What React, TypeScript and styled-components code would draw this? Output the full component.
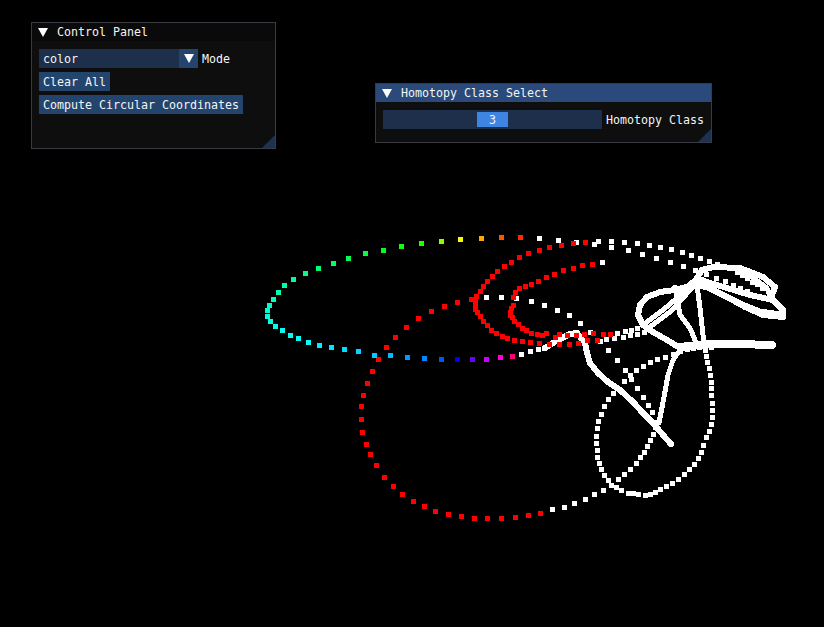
import React from "react";
import styled, { createGlobalStyle } from "styled-components";

const GlobalStyle = createGlobalStyle`
  html, body { margin: 0; padding: 0; background: #000; }
  #root { width: 824px; height: 627px; }
`;

type P = [number, number];
type CP = [number, number, string];

const rainbow: CP[] = [
  [520,237,"#ff2a00"],[501,237,"#ff5500"],[481,238,"#ffaa00"],[460,239,"#eeff00"],[441,241,"#88ff00"],
  [421,243,"#22ff00"],[401,246,"#11ff11"],[383,250,"#00ff22"],[365,253,"#00ff3c"],[348,258,"#00ff55"],
  [333,263,"#00ff66"],[318,268,"#00ff77"],[305,273,"#00ff88"],[293,279,"#00ff99"],[284,285,"#00ffaa"],
  [278,292,"#00ffb3"],[273,299,"#00ffbb"],[269,305,"#00ffc8"],[267,310,"#00ffd0"],[267,316,"#00ffd8"],
  [270,321,"#00ffdd"],[275,326,"#00ffe6"],[282,330,"#00ffee"],[290,335,"#00fff2"],[298,338,"#00fff8"],
  [308,342,"#00ffff"],[319,345,"#00eeff"],[331,347,"#00e6ff"],[344,349,"#00ddff"],[358,351,"#00d4ff"],
  [374,355,"#00ccff"],[390,355,"#00bbff"],[407,357,"#0099ff"],[424,358,"#0088ff"],[441,359,"#0055ff"],
  [457,359,"#0000ff"],[472,359,"#6600ff"],[486,359,"#cc00ff"],[500,357,"#ff00dd"],[512,356,"#ff0077"],
];

const red: P[] = [
  [585,242],[573,243],[561,245],[549,247],[539,250],[528,253],[519,257],[511,262],[504,266],[497,271],
  [492,276],[487,281],[483,286],[480,291],[476,296],[475,301],[475,305],[475,309],[477,312],[480,316],
  [483,321],[487,325],[491,330],[496,333],[502,336],[507,338],[514,340],[522,341],[530,342],[539,343],
  [549,344],[559,344],[569,344],[578,343],[587,340],[597,340],
  [592,264],[582,265],[573,268],[563,270],[554,274],[546,277],[538,281],[531,284],[525,286],[519,288],
  [515,292],[513,297],[513,305],[511,308],[510,312],[510,315],[512,317],[514,321],[518,324],[522,328],
  [526,330],[531,333],[537,334],[542,335],[546,333],[555,337],[559,334],[567,335],[576,335],[584,334],
  [593,333],[603,334],[610,334],
  [471,299],[457,302],[444,306],[431,311],[418,318],[406,327],[395,337],[386,347],[378,359],[372,371],
  [367,383],[363,395],[361,406],[361,419],[362,432],[366,444],[370,454],[376,465],[384,477],[393,486],
  [402,494],[413,501],[424,506],[435,511],[448,514],[461,516],[474,518],[487,518],[501,518],[515,517],
  [528,515],[540,513],
];

const white: P[] = [
  [552,509],[564,507],[574,503],[585,499],[594,494],[603,490],[618,479],[624,474],[630,469],[636,463],
  [640,457],[644,452],[647,446],[650,440],[653,434],[655,427],[656,422],[652,412],[648,405],[643,397],
  [637,388],[631,379],[630,375],[625,370],[617,360],[608,350],[590,332],[580,323],[569,315],[557,310],
  [544,305],[531,301],[516,298],[501,297],[486,297],
  [624,381],[636,370],[643,366],[650,362],[657,359],[665,357],[673,354],[680,351],[687,349],[693,348],
  [699,347],[705,347],[711,347],
  [613,393],[608,399],[604,406],[601,414],[598,421],[597,428],[596,436],[596,443],[597,450],[597,457],
  [599,463],[601,469],[604,475],[608,480],[611,485],[616,487],[621,490],[628,493],[633,493],[638,494],
  [645,495],[650,494],[655,492],[660,489],[666,486],[672,483],[678,479],[684,474],[689,469],[694,464],
  [698,458],[701,452],[703,445],[706,437],[709,431],[711,424],[712,417],[712,410],[712,403],[711,395],
  [711,388],[711,382],[710,375],[709,368],[707,362],[706,356],[705,350],
  [539,238],[558,240],[576,242],[594,244],[598,241],[611,241],[611,247],[624,242],[628,250],[637,243],
  [642,254],[649,245],[656,258],[660,247],[670,262],[671,249],[683,266],[682,252],[695,270],[691,255],
  [700,258],[706,274],[709,261],[716,278],[725,281],[733,285],[740,288],[747,291],[602,262],
  [717,264],[737,272],[742,275],[747,278],[752,282],[757,284],[762,288],
  [521,354],[530,351],[538,349],[544,348],[600,341],[606,339],[614,338],[617,333],[623,337],[625,331],
  [630,335],[631,330],[637,334],[637,328],[644,332],
];

const thick: { pts: P[]; w: number }[] = [
  { w: 6, pts: [[671,444],[663,435],[653,423],[643,413],[633,402],[620,390],[608,382],[598,373],[590,363],[587,353],[585,343],[577,333],[570,334],[562,338],[553,343],[545,348]] },
  { w: 5, pts: [[659,423],[664,397],[668,375],[673,360],[680,350]] },
  { w: 8, pts: [[680,347],[707,344],[737,344],[772,345]] },
  { w: 6, pts: [[680,348],[667,340],[653,332],[643,325],[638,315],[640,305],[647,297],[660,292],[675,290],[693,285],[707,287],[727,297],[745,307],[763,315],[783,317],[783,310],[773,300],[750,295],[727,288],[707,282],[697,278],[702,270],[713,267],[740,268],[763,277],[775,287],[772,295]] },
  { w: 5, pts: [[700,283],[720,293],[740,303],[760,311],[780,314]] },
  { w: 5, pts: [[740,272],[752,277],[767,288],[770,297]] },
  { w: 5, pts: [[650,327],[670,312],[683,298],[697,282]] },
  { w: 5, pts: [[647,322],[663,310],[677,298],[687,287],[697,278]] },
  { w: 5, pts: [[675,287],[677,298],[680,315],[690,328],[695,340]] },
  { w: 5, pts: [[697,285],[700,308],[703,335],[703,344]] },
];

const Desktop = styled.div`
  position: relative;
  width: 824px;
  height: 627px;
  overflow: hidden;
  background: #000;
  font-family: "DejaVu Sans Mono", "Liberation Mono", monospace;
  font-size: 11.63px;
  color: #f4f4f4;
`;

const Scene = styled.svg`
  position: absolute;
  inset: 0;
  display: block;
`;

const Window = styled.section<{ $x: number; $y: number; $w: number; $h: number }>`
  position: absolute;
  left: ${(p) => p.$x}px;
  top: ${(p) => p.$y}px;
  width: ${(p) => p.$w}px;
  height: ${(p) => p.$h}px;
  box-sizing: border-box;
  display: flex;
  flex-direction: column;
  background: #0e0e0e;
  border: 1px solid #3a3a42;
`;

const TitleBar = styled.header<{ $active?: boolean }>`
  height: 18px;
  flex: none;
  display: flex;
  align-items: center;
  gap: 9px;
  padding-left: 6px;
  box-sizing: border-box;
  background: ${(p) => (p.$active ? "#294a7a" : "#0a0a0a")};
  white-space: pre;
`;

const Body = styled.div`
  flex: 1;
  display: flex;
  flex-direction: column;
  align-items: flex-start;
  gap: 4px;
  padding: 8px 7px;
`;

const Row = styled.div`
  display: flex;
  align-items: center;
  gap: 4px;
  white-space: pre;
`;

const Combo = styled.div`
  width: 159px;
  height: 19px;
  display: flex;
  align-items: center;
  justify-content: space-between;
  padding-left: 4px;
  box-sizing: border-box;
  background: #1d2f4a;
`;

const ComboArrow = styled.div`
  width: 19px;
  height: 19px;
  display: flex;
  align-items: center;
  justify-content: center;
  background: #23456d;
`;

const Button = styled.div`
  height: 19px;
  padding: 0 4px;
  display: flex;
  align-items: center;
  background: #23456d;
  white-space: pre;
`;

const Slider = styled.div`
  width: 219px;
  height: 19px;
  display: flex;
  align-items: center;
  background: #1d2f4a;
  padding-left: 94px;
  box-sizing: border-box;
`;

const Grab = styled.div`
  width: 31px;
  height: 15px;
  display: flex;
  align-items: center;
  justify-content: center;
  background: #3d85e0;
`;

const Grip = styled.svg`
  position: absolute;
  right: 0;
  bottom: 0;
  width: 13px;
  height: 13px;
  display: block;
`;

const Triangle = ({ size = 9 }: { size?: number }) => (
  <svg width={size + 1} height={size} viewBox="0 0 10 9" style={{ flex: "none" }}>
    <polygon points="0,0 10,0 5,9" fill="#fff" />
  </svg>
);

const ResizeGrip = () => (
  <Grip viewBox="0 0 13 13">
    <polygon points="13,0 13,13 0,13" fill="#1d3150" />
  </Grip>
);

const Dots = ({ pts, fill }: { pts: P[]; fill: string }) => (
  <g fill={fill}>
    {pts.map(([x, y], i) => (
      <rect key={i} x={x - 2} y={y - 2} width={5} height={5} />
    ))}
  </g>
);

export default function App() {
  return (
    <Desktop>
      <GlobalStyle />
      <Scene width={824} height={627} viewBox="0 0 824 627" shapeRendering="crispEdges">
        <g fill="none" stroke="#fff" strokeLinejoin="round" strokeLinecap="round">
          {thick.map((t, i) => (
            <polyline key={i} strokeWidth={t.w} points={t.pts.map((p) => p.join(",")).join(" ")} />
          ))}
        </g>
        <Dots pts={white} fill="#fff" />
        <Dots pts={red} fill="#ff0000" />
        {rainbow.map(([x, y, c], i) => (
          <rect key={i} x={x - 2} y={y - 2} width={5} height={5} fill={c} />
        ))}
      </Scene>

      <Window $x={31} $y={22} $w={245} $h={127}>
        <TitleBar>
          <Triangle />
          <span>Control Panel</span>
        </TitleBar>
        <Body>
          <Row>
            <Combo>
              <span>color</span>
              <ComboArrow>
                <Triangle />
              </ComboArrow>
            </Combo>
            <span>Mode</span>
          </Row>
          <Button>Clear All</Button>
          <Button>Compute Circular Coordinates</Button>
        </Body>
        <ResizeGrip />
      </Window>

      <Window $x={375} $y={83} $w={337} $h={60}>
        <TitleBar $active>
          <Triangle />
          <span>Homotopy Class Select</span>
        </TitleBar>
        <Body>
          <Row>
            <Slider>
              <Grab>3</Grab>
            </Slider>
            <span>Homotopy Class</span>
          </Row>
        </Body>
        <ResizeGrip />
      </Window>
    </Desktop>
  );
}
